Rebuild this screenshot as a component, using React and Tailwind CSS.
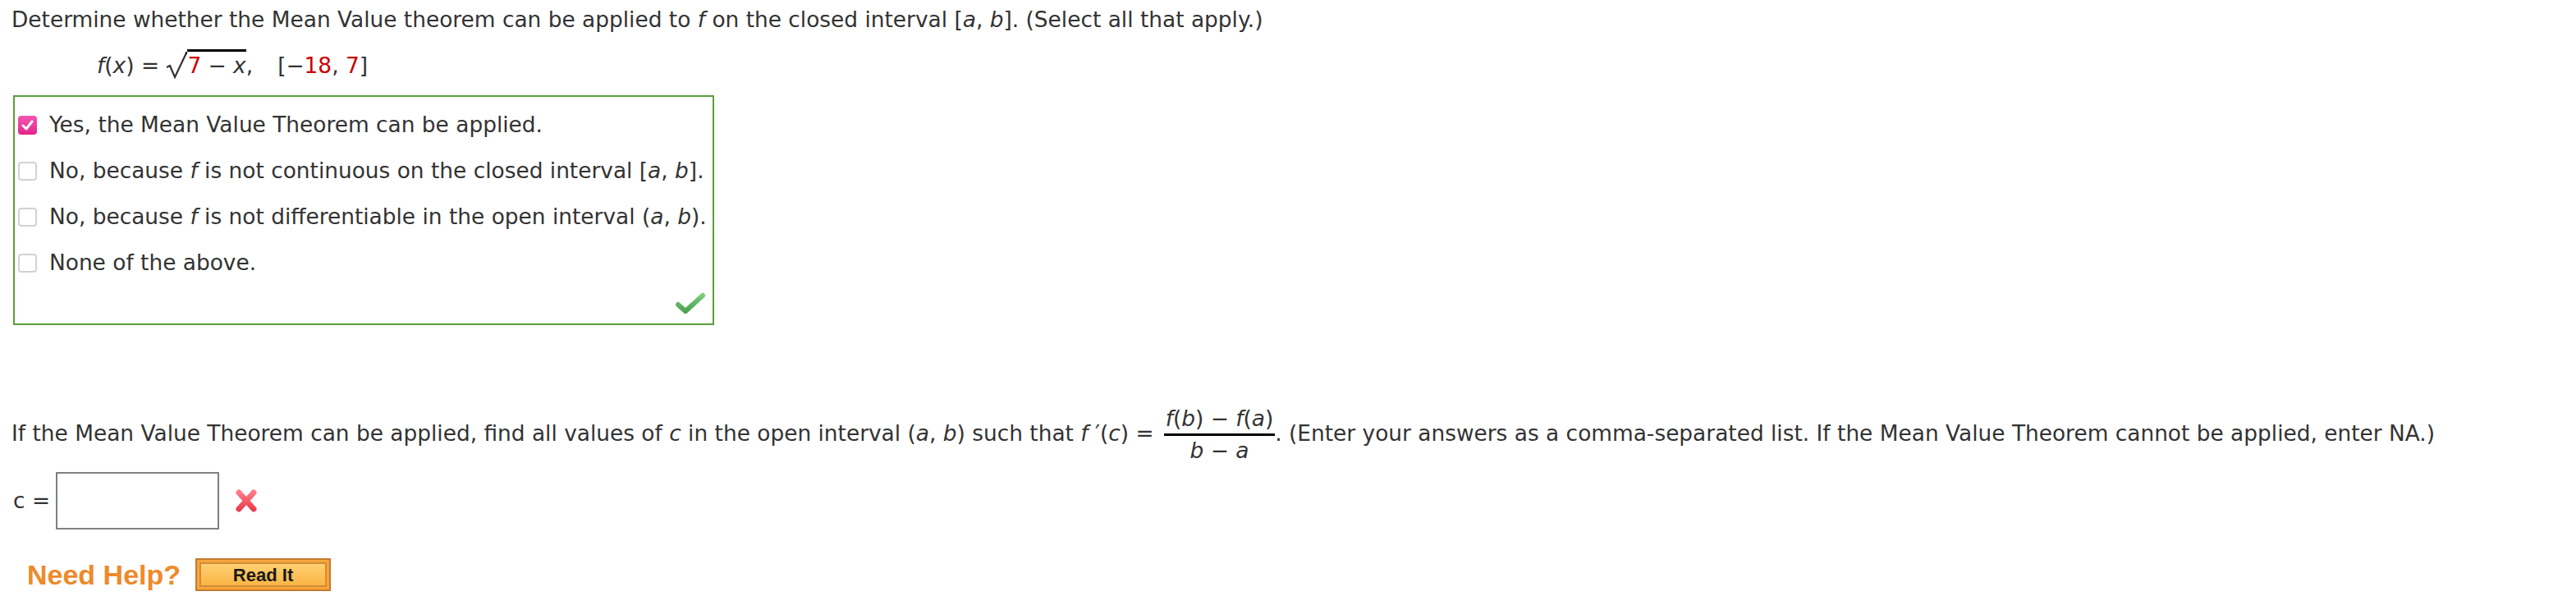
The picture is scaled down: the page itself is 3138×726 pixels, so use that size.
import React from "react";

const OPTIONS = [
    { checked: true, text: <>Yes, the Mean Value Theorem can be applied.</> },
    {
        checked: false,
        text: (
            <>
                No, because <i>f</i> is not continuous on the closed interval [<i>a</i>, <i>b</i>].
            </>
        ),
    },
    {
        checked: false,
        text: (
            <>
                No, because <i>f</i> is not differentiable in the open interval (<i>a</i>, <i>b</i>).
            </>
        ),
    },
    { checked: false, text: <>None of the above.</> },
];

function CheckBox({ checked }) {
    if (checked) {
        return (
            <span className="flex h-[23px] w-[23px] shrink-0 items-center justify-center rounded-[4px] bg-gradient-to-b from-[#f455b0] to-[#e2208a]">
                <svg width="15" height="13" viewBox="0 0 15 13">
                    <path d="M2 7 L6 11 L13 2" fill="none" stroke="#fff" strokeWidth="3" strokeLinecap="round" strokeLinejoin="round" />
                </svg>
            </span>
        );
    }
    return <span className="block h-[23px] w-[23px] shrink-0 rounded-[4px] border-2 border-[#d2d2d2] bg-white" />;
}

function Fraction({ top, bottom }) {
    return (
        <span className="mx-[12px] inline-flex flex-col items-stretch text-center align-middle">
            <span className="px-[2px] leading-[36px]">{top}</span>
            <span className="border-t-[3px] border-black leading-[36px]">{bottom}</span>
        </span>
    );
}

export default function App() {
    return (
        <main
            className="min-h-screen w-full bg-white px-[14px] text-[26.4px] text-[#333]"
            style={{ fontFamily: '"DejaVu Sans", Verdana, sans-serif' }}
        >
            <p className="leading-[48px]">
                Determine whether the Mean Value theorem can be applied to <i>f</i> on the closed interval [<i>a</i>, <i>b</i>]. (Select all that apply.)
            </p>

            <p className="mt-[8px] ml-[104px] leading-[48px]">
                <i>f</i>(<i>x</i>) ={" "}
                <svg className="inline-block align-[-7px]" width="26" height="33" viewBox="0 0 26 33">
                    <path d="M1 19 L5 17 L11 31 L25 1.5" fill="none" stroke="#333" strokeWidth="2.2" strokeLinejoin="miter" />
                    <path d="M24 1.5 L26 1.5" stroke="#000" strokeWidth="3" />
                </svg>
                <span className="border-t-[3px] border-black pt-[1px]">
                    <span className="text-[#cc0000]">7</span> − <i>x</i>
                </span>
                ,<span className="ml-[30px]">[−</span>
                <span className="text-[#cc0000]">18</span>, <span className="text-[#cc0000]">7</span>]
            </p>

            <div className="mt-[12px] ml-[2px] flex h-[280px] w-[854px] flex-col border-2 border-[#5b9f3d] px-[4px] pt-[6px]">
                {OPTIONS.map((o, i) => (
                    <label key={i} className="flex h-[56px] items-center gap-[15px]">
                        <CheckBox checked={o.checked} />
                        <span>{o.text}</span>
                    </label>
                ))}
                <div className="flex flex-1 items-center justify-end pr-[4px] pb-[2px]">
                    <svg width="38" height="28" viewBox="0 0 38 28">
                        <defs>
                            <linearGradient id="gk" x1="0" y1="0" x2="0" y2="1">
                                <stop offset="0" stopColor="#7ccc7a" />
                                <stop offset="1" stopColor="#4aa350" />
                            </linearGradient>
                        </defs>
                        <path d="M4 15 L13 23 L34 4" fill="none" stroke="url(#gk)" strokeWidth="6" strokeLinecap="round" strokeLinejoin="round" />
                    </svg>
                </div>
            </div>

            <p className="mt-[96px] leading-[48px]">
                If the Mean Value Theorem can be applied, find all values of <i>c</i> in the open interval (<i>a</i>, <i>b</i>) such that <i>f</i> ′(<i>c</i>) =
                <Fraction
                    top={
                        <>
                            <i>f</i>(<i>b</i>) − <i>f</i>(<i>a</i>)
                        </>
                    }
                    bottom={
                        <>
                            <i>b</i> − <i>a</i>
                        </>
                    }
                />
                <span className="-ml-[12px]">. (Enter your answers as a comma-separated list. If the Mean Value Theorem cannot be applied, enter NA.)</span>
            </p>

            <div className="mt-[8px] flex items-center">
                <span className="w-[54px] pl-[2px]">c =</span>
                <input type="text" className="h-[70px] w-[199px] border-2 border-[#808080] bg-white outline-none" />
                <svg className="ml-[19px]" width="28" height="30" viewBox="0 0 28 30">
                    <defs>
                        <linearGradient id="rx" x1="0" y1="0" x2="0" y2="1">
                            <stop offset="0" stopColor="#ff7a86" />
                            <stop offset="1" stopColor="#ea3f4e" />
                        </linearGradient>
                    </defs>
                    <path d="M5 5 L23 25 M23 5 L5 25" stroke="url(#rx)" strokeWidth="7" strokeLinecap="round" />
                </svg>
            </div>

            <div className="mt-[35px] flex items-center" style={{ fontFamily: '"Liberation Sans", Arial, sans-serif' }}>
                <span className="ml-[19px] text-[34px] font-bold leading-[40px] text-[#ee8a2a]">Need Help?</span>
                <button className="ml-[18px] flex h-[40px] w-[165px] items-center justify-center border-2 border-[#c47a2c] bg-[#f7a63c] p-[3px]">
                    <span className="flex h-full w-full items-center justify-center border-2 border-[#d48c38] bg-gradient-to-b from-[#ffd070] to-[#fbb544] text-[22px] font-bold text-[#1a1a1a]">
                        Read It
                    </span>
                </button>
            </div>
        </main>
    );
}
